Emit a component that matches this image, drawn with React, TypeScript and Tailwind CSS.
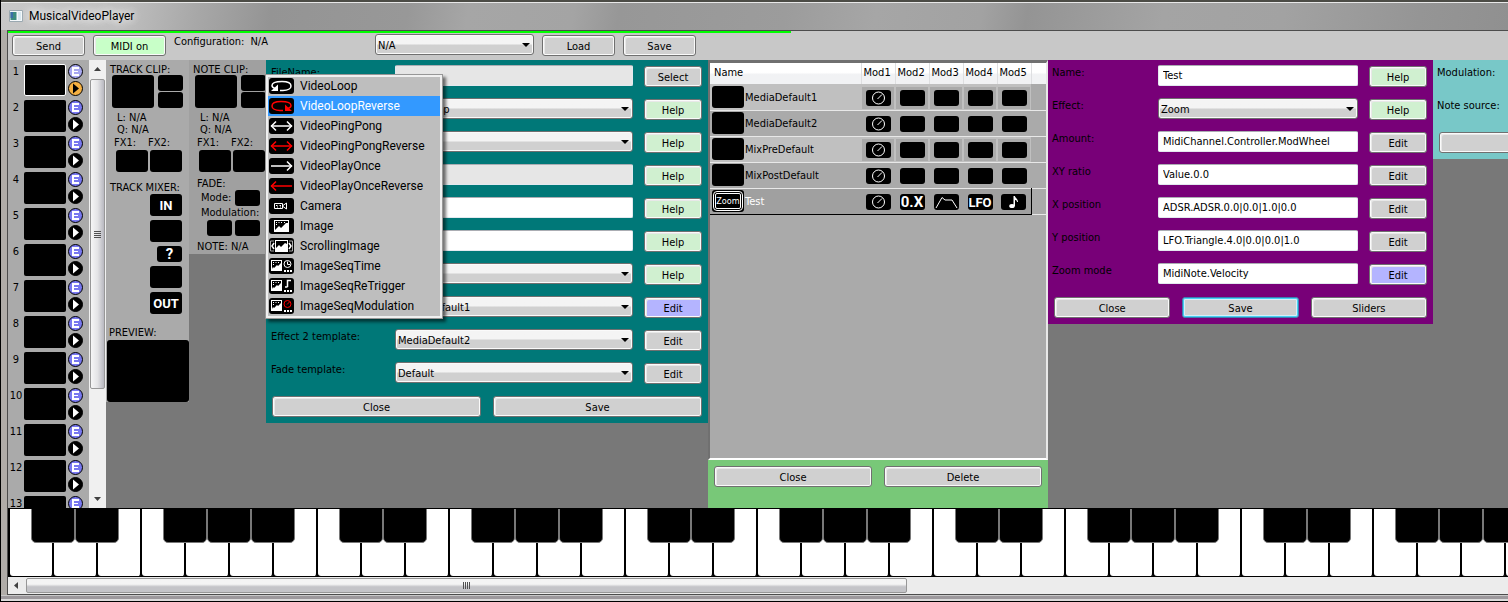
import React from 'react';

const ui = "font-['DejaVu_Sans_Condensed','DejaVu_Sans',sans-serif]";

type Tone = 'plain' | 'green' | 'mint' | 'blue';

const tones: Record<Tone, string> = {
  plain: 'bg-[#d0d0d0]',
  green: 'bg-[#c8ffc8]',
  mint: 'bg-[#d0f0d0]',
  blue: 'bg-[#b4b4ff]',
};

function Btn({ children, label, tone = 'plain', focused = false, className = '' }: {
  children?: React.ReactNode;
  label?: string;
  tone?: Tone;
  focused?: boolean;
  className?: string;
}) {
  const edge = focused
    ? 'border-[#3c7fb1] shadow-[inset_0_0_0_1px_#46d0f5,inset_0_0_0_2px_#d8f0f8]'
    : 'border-[#707070] shadow-[inset_0_0_0_1px_#fafafa,inset_2px_2px_0_0_#e8e8e8]';
  return (
    <button type="button" aria-label={label} className={`flex h-[21px] items-center justify-center rounded-[3px] border pt-[2px] text-black ${edge} ${tones[tone]} ${className}`}>
      {children}
    </button>
  );
}

function Combo({ id, value, className = '' }: { id: string; value: string; className?: string }) {
  return (
    <span className={`relative block ${className}`}>
      <select
        id={id}
        defaultValue={value}
        className="block h-[21px] w-full appearance-none rounded-[3px] border border-[#707070] bg-linear-to-b from-[#f4f4f4] from-45% to-[#d0d0d0] to-55% pt-[2px] pl-[2px] text-black shadow-[inset_0_0_0_1px_#fafafa] outline-none"
      >
        <option>{value}</option>
      </select>
      <svg className="pointer-events-none absolute top-[9px] right-1" width="8" height="4" viewBox="0 0 8 4" aria-hidden="true">
        <path d="M0 0H8L4 4Z" fill="#000" />
      </svg>
    </span>
  );
}

function TextBox({ id, value = '', disabled = false }: { id: string; value?: string; disabled?: boolean }) {
  return (
    <input
      id={id}
      type="text"
      defaultValue={value}
      disabled={disabled}
      className={`block h-[21px] w-full rounded-[2px] border border-[#e3e9ef] border-t-[#abadb3] pl-1 text-black outline-none ${disabled ? 'bg-[#e6e6e6]' : 'bg-white'}`}
    />
  );
}

/* ---------- tracks ---------- */

function Tile({ className = '', children }: { className?: string; children?: React.ReactNode }) {
  return <div className={`flex shrink-0 items-center justify-center rounded-[3px] bg-black text-white ${className}`}>{children}</div>;
}

const small = 'h-4 w-[25px]';
const medium = 'h-[22px] w-8';

function TrackRow({ n }: { n: number }) {
  const first = n === 1;
  return (
    <li className="flex h-9 shrink-0">
      <span className="w-4 pt-px text-center text-[11px]">{n}</span>
      <button
        type="button"
        aria-label={`Track ${n} clip`}
        className={`h-8 w-[42px] rounded-[2px] bg-black ${first ? 'border border-white' : ''}`}
      />
      <span className="ml-[2px] flex flex-col gap-[2px]">
        <button type="button" aria-label={`Track ${n} edit`}>
          <svg width="15" height="15" viewBox="0 0 15 15">
            <circle cx="7.5" cy="7.5" r="7" fill={first ? '#a8a8f0' : '#7878f0'} stroke="#000" />
            <path d="M4 3H11V5H6V7H10V8H6V10H11V12H4Z" fill="#fff" />
          </svg>
        </button>
        <button type="button" aria-label={`Track ${n} play`}>
          <svg width="15" height="15" viewBox="0 0 15 15">
            <circle cx="7.5" cy="7.5" r="7" fill={first ? '#f5b041' : '#000'} stroke="#000" />
            <path d="M5 2.500V12.500L11 7.500Z" fill={first ? '#000' : '#fff'} />
          </svg>
        </button>
      </span>
    </li>
  );
}

function Tracks() {
  return (
    <div className="relative w-[98px] shrink-0 overflow-hidden bg-[#aaa]">
      <div className="absolute inset-0 flex">
        <ol className="flex w-[81px] flex-col pt-1">
          {Array.from({ length: 13 }, (_, i) => <TrackRow key={i} n={i + 1} />)}
        </ol>
        <div className="flex w-[17px] flex-col items-center bg-[#f0f0f0]">
          <svg className="mt-[7px] shrink-0" width="7" height="4" viewBox="0 0 7 4"><path d="M0 4H7L3.500 0Z" fill="#404040" /></svg>
          <div className="mt-2 flex h-[310px] w-[15px] shrink-0 flex-col items-center justify-center gap-px rounded-[2px] border border-[#979797] bg-linear-to-r from-[#f6f6f6] via-[#e4e4e6] to-[#b8b8c0]">
            {[0, 1, 2, 3].map((i) => <i key={i} className="h-px w-[7px] bg-[#505050]" />)}
          </div>
          <svg className="mt-auto mb-[7px] shrink-0" width="7" height="4" viewBox="0 0 7 4"><path d="M0 0H7L3.500 4Z" fill="#404040" /></svg>
        </div>
      </div>
    </div>
  );
}

function ClipHead({ title }: { title: string }) {
  return (
    <>
      <h2 className="h-[15px] pt-[3px] pl-1 leading-[13px] whitespace-nowrap">{title}</h2>
      <div className="flex gap-1 pl-[6px]">
        <Tile className="h-[33px] w-[42px]" />
        <div className="flex flex-col gap-px">
          <Tile className={small} />
          <Tile className={small} />
        </div>
      </div>
      <div className="pt-1 pl-[11px] leading-[12px]">
        <p>L: N/A</p>
        <p>Q: N/A</p>
      </div>
      <div className="flex gap-[2px] pl-2 leading-[14px]">
        <span className="w-8">FX1:</span>
        <span className="w-8">FX2:</span>
      </div>
      <div className="flex gap-[2px] pl-[10px]">
        <Tile className={medium} />
        <Tile className={medium} />
      </div>
    </>
  );
}

const glyph = "font-['Roboto',sans-serif] font-bold leading-none";

function TrackClip() {
  return (
    <section className="w-[83px] shrink-0 self-start bg-[#aaa]">
      <ClipHead title="TRACK CLIP:" />
      <h2 className="pt-[9px] pl-1 leading-[13px] whitespace-nowrap">TRACK MIXER:</h2>
      <div className="flex flex-col items-end gap-1 pr-[7px]">
        <Tile className={medium}><span className={`text-[13px] ${glyph}`}>IN</span></Tile>
        <Tile className={medium} />
        <Tile className={small}><span className={`text-[15px] ${glyph}`}>?</span></Tile>
        <Tile className={medium} />
        <Tile className={medium}><span className={`text-[13px] ${glyph}`}>OUT</span></Tile>
      </div>
      <h2 className="pt-3 pb-px pl-[3px] leading-[13px]">PREVIEW:</h2>
      <Tile className="ml-px h-[62px] w-[82px]" />
    </section>
  );
}

function NoteClip() {
  return (
    <section className="w-[77px] shrink-0 self-start overflow-hidden bg-[#a0a0a0]">
      <ClipHead title="NOTE CLIP:" />
      <h2 className="pt-[5px] pl-2 leading-[13px]">FADE:</h2>
      <div className="flex justify-between pr-[6px] pl-3">
        <span className="leading-[16px]">Mode:</span>
        <Tile className={small} />
      </div>
      <p className="pl-3 leading-[14px]">Modulation:</p>
      <div className="flex justify-end gap-[3px] pr-[6px]">
        <Tile className={small} />
        <Tile className={small} />
      </div>
      <p className="pt-1 pl-2 leading-[14px]">NOTE: N/A</p>
    </section>
  );
}

/* ---------- media template ---------- */

type Field = {
  label: string;
  kind: 'text' | 'combo' | 'off';
  value?: string;
  action: string;
  tone?: Tone;
};

const mediaFields: Field[] = [
  { label: 'FileName:', kind: 'off', action: 'Select' },
  { label: 'Type:', kind: 'combo', value: 'VideoLoop', action: 'Help', tone: 'mint' },
  { label: 'MixMode:', kind: 'combo', value: 'Add', action: 'Help', tone: 'mint' },
  { label: 'SyncLength:', kind: 'off', action: 'Help', tone: 'mint' },
  { label: 'Quantize:', kind: 'text', action: 'Help', tone: 'mint' },
  { label: 'MidiNote:', kind: 'text', action: 'Help', tone: 'mint' },
  { label: 'Mode:', kind: 'combo', value: 'Key', action: 'Help', tone: 'mint' },
  { label: 'Effect 1 template:', kind: 'combo', value: 'MediaDefault1', action: 'Edit', tone: 'blue' },
  { label: 'Effect 2 template:', kind: 'combo', value: 'MediaDefault2', action: 'Edit' },
  { label: 'Fade template:', kind: 'combo', value: 'Default', action: 'Edit' },
];

const effectFields: Field[] = [
  { label: 'Name:', kind: 'text', value: 'Test', action: 'Help', tone: 'mint' },
  { label: 'Effect:', kind: 'combo', value: 'Zoom', action: 'Help', tone: 'mint' },
  { label: 'Amount:', kind: 'text', value: 'MidiChannel.Controller.ModWheel', action: 'Edit' },
  { label: 'XY ratio', kind: 'text', value: 'Value.0.0', action: 'Edit' },
  { label: 'X position', kind: 'text', value: 'ADSR.ADSR.0.0|0.0|1.0|0.0', action: 'Edit' },
  { label: 'Y position', kind: 'text', value: 'LFO.Triangle.4.0|0.0|0.0|1.0', action: 'Edit' },
  { label: 'Zoom mode', kind: 'text', value: 'MidiNote.Velocity', action: 'Edit', tone: 'blue' },
];

function FieldRow({ field, id, columns }: { field: Field; id: string; columns: string }) {
  return (
    <div className={`grid h-[33px] items-start ${columns}`}>
      <label htmlFor={id} className="pt-px whitespace-nowrap">{field.label}</label>
      {field.kind === 'combo'
        ? <Combo id={id} value={field.value ?? ''} />
        : <TextBox id={id} value={field.value} disabled={field.kind === 'off'} />}
      <Btn tone={field.tone} className="mt-px ml-[11px]">{field.action}</Btn>
    </div>
  );
}

function MenuIcon({ children }: { children: React.ReactNode }) {
  return (
    <svg width="25" height="16" viewBox="0 0 25 16" className="shrink-0" aria-hidden="true">
      <rect width="25" height="16" rx="3" fill="#000" />
      {children}
    </svg>
  );
}

function LoopArt({ color, flip }: { color: string; flip?: boolean }) {
  return (
    <g transform={flip ? 'translate(25 0) scale(-1 1)' : undefined} fill="none" stroke={color} strokeWidth="1.500">
      <path d="M11 12.500H14C19 12.500 22 10.500 22 8C22 5 18 3.500 13 3.500C8 3.500 3 4.500 3 7.500C3 9 4.500 10 6 10.500" />
      <path d="M2 13H9V6.500Z" fill={color} stroke="none" />
    </g>
  );
}

function ArrowArt({ color, left, right }: { color: string; left?: boolean; right?: boolean }) {
  return (
    <g fill="none" stroke={color} strokeWidth="1.500">
      <path d="M2 8H23" />
      {left && <path d="M7 3.500L2.500 8L7 12.500" />}
      {right && <path d="M18 3.500L22.500 8L18 12.500" />}
    </g>
  );
}

function Photo() {
  return (
    <>
      <path d="M2 2H13V13H2Z" fill="#fff" />
      <path d="M3 3H12V5L9 8L8 7L5 10L4 9L3 11Z" fill="#000" />
      <path d="M4 4.500H5M6.500 4.500H7.500M9 4.500H10M4 6.500H5" stroke="#fff" />
    </>
  );
}

function Dots() {
  return <path d="M15 12H17V14H15ZM18 12H20V14H18ZM21 12H23V14H21Z" fill="#fff" />;
}

const menu: { name: string; art: React.ReactNode }[] = [
  { name: 'VideoLoop', art: <LoopArt color="#fff" /> },
  { name: 'VideoLoopReverse', art: <LoopArt color="#f00" flip /> },
  { name: 'VideoPingPong', art: <ArrowArt color="#fff" left right /> },
  { name: 'VideoPingPongReverse', art: <ArrowArt color="#f00" left right /> },
  { name: 'VideoPlayOnce', art: <ArrowArt color="#fff" right /> },
  { name: 'VideoPlayOnceReverse', art: <ArrowArt color="#f00" left /> },
  {
    name: 'Camera',
    art: (
      <g fill="none" stroke="#fff">
        <path d="M5.500 5.500H13.500V10.500H5.500ZM14 7.500L17.500 5V11L14 8.500" />
        <path d="M7 7.500H8.500M10.500 7.500H12M8 9H9M11 9H12" />
      </g>
    ),
  },
  {
    name: 'Image',
    art: (
      <>
        <path d="M5 2H20V14H5Z" fill="#fff" />
        <path d="M6 3H19V5L17 5L12 10L10 8L6 12Z" fill="#000" />
        <path d="M7 4.500H8M9.500 4.500H10.500M12 4.500H13M15 4.500H16M7 6.500H8" stroke="#fff" />
      </>
    ),
  },
  {
    name: 'ScrollingImage',
    art: (
      <>
        <path d="M1.500 3H5M1.500 13H5M20 3H23.500M20 13H23.500M1.500 3V13M23.500 3V13" stroke="#aaa" />
        <path d="M6 2H19V14H6Z" fill="#fff" />
        <path d="M7 3H18V6L16 5L12 9L10 7L7 10Z" fill="#000" />
        <path d="M5 5L3 8L5 11M20 5L22 8L20 11" fill="none" stroke="#fff" strokeWidth="1.500" />
      </>
    ),
  },
  {
    name: 'ImageSeqTime',
    art: (
      <>
        <Photo />
        <Dots />
        <circle cx="18.500" cy="6" r="3.500" fill="none" stroke="#fff" />
        <path d="M18.500 3.500V6.500H21" fill="none" stroke="#fff" />
      </>
    ),
  },
  {
    name: 'ImageSeqReTrigger',
    art: (
      <>
        <Photo />
        <Dots />
        <path d="M18.500 9V2.500H22M16 9H18.500" fill="none" stroke="#fff" strokeWidth="1.500" />
      </>
    ),
  },
  {
    name: 'ImageSeqModulation',
    art: (
      <>
        <Photo />
        <Dots />
        <circle cx="18.500" cy="6" r="3.500" fill="none" stroke="#f00" />
        <path d="M18 6.500L20.500 4" stroke="#f00" />
      </>
    ),
  },
];

function TypeMenu() {
  return (
    <ul
      role="menu"
      className="absolute top-[14px] -left-px z-10 w-[178px] border border-[#979797] bg-[#bebebe] px-px pt-px pb-[2px] font-['Roboto',sans-serif] text-[12px] shadow-[inset_0_0_0_2px_#f0f0f0,3px_3px_3px_rgba(0,0,0,0.55)]"
    >
      {menu.map((item, i) => (
        <li key={item.name} role="none" className="px-px">
          <button
            type="button"
            role="menuitem"
            className={`flex h-5 w-full items-center gap-[6px] pl-px text-left ${i === 1 ? 'bg-[#3399ff] text-white' : 'text-black'}`}
          >
            <MenuIcon>{item.art}</MenuIcon>
            {item.name}
          </button>
        </li>
      ))}
    </ul>
  );
}

function MediaPanel() {
  return (
    <section className="relative w-[442px] shrink-0 self-start bg-[#007878] pt-[5px] pr-[6px] pb-[6px] pl-[5px]">
      {mediaFields.map((f, i) => (
        <FieldRow key={f.label} field={f} id={`media-${i}`} columns="grid-cols-[124px_238px_1fr]" />
      ))}
      <div className="mt-px ml-px grid grid-cols-2 gap-3">
        <Btn>Close</Btn>
        <Btn>Save</Btn>
      </div>
      <TypeMenu />
    </section>
  );
}

/* ---------- effect list ---------- */

const dial = (
  <g fill="none" stroke="#fff">
    <circle cx="12.500" cy="8" r="6" />
    <path d="M11.500 9L16 4.500" />
  </g>
);

function ModTile({ art, children }: { art?: React.ReactNode; children?: React.ReactNode }) {
  return (
    <Tile className={`mx-auto ${small}`}>
      {art && <svg width="25" height="16" viewBox="0 0 25 16" aria-hidden="true">{art}</svg>}
      {children}
    </Tile>
  );
}

const effects = ['MediaDefault1', 'MediaDefault2', 'MixPreDefault', 'MixPostDefault', 'Test'];

function EffectList() {
  return (
    <section className="flex w-[340px] shrink-0 flex-col bg-[#78c878]">
      <div className="flex-1 border-2 border-t-[3px] border-r-[#e8e8e8] border-b-white border-l-[#707070] border-t-[#707070] bg-[#aaa]">
        <table className="w-full table-fixed border-collapse">
          <colgroup>
            <col className="w-[151px]" />
            <col className="w-[34px]" />
            <col className="w-[34px]" />
            <col className="w-[34px]" />
            <col className="w-[34px]" />
            <col className="w-[34px]" />
            <col />
          </colgroup>
          <thead>
            <tr className="h-[21px] bg-linear-to-b from-white from-45% to-[#f1f2f4] to-55% text-left">
              <th scope="col" className="border-r border-[#dedfe1] p-0 pb-[2px] pl-1 font-normal">Name</th>
              {[1, 2, 3, 4, 5].map((m) => (
                <th key={m} scope="col" className="border-r border-[#dedfe1] p-0 pb-[2px] pl-[2px] font-normal">Mod{m}</th>
              ))}
              <td />
            </tr>
          </thead>
          <tbody>
            {effects.map((name, r) => {
              const chosen = name === 'Test';
              const lit = r === 0 || r === 2;
              const band = chosen ? 'bg-[#a0a0a0] border-y border-t-[#e8e8e8] border-b-black' : lit ? 'bg-[#c0c0c0]' : '';
              return (
                <tr key={name} className="h-[26px] border-b border-[#e8e8e8]">
                  <td className={`p-0 pl-[2px] ${band}`}>
                    <div className="flex items-center">
                      <Tile className={medium}>
                        {chosen && (
                          <span className="flex h-4 w-[26px] items-center justify-center rounded-[2px] border border-white text-[9px] leading-none outline outline-white outline-offset-1">
                            Zoom
                          </span>
                        )}
                      </Tile>
                      <span className={`pt-[2px] pl-px ${chosen ? 'text-white' : ''}`}>{name}</span>
                    </div>
                  </td>
                  {[0, 1, 2, 3, 4].map((c) => (
                    <td key={c} className={`p-0 pt-[2px] ${band} ${chosen && c === 4 ? 'border-r border-r-black' : ''}`}>
                      <div className={`mx-px flex h-[22px] items-center ${chosen ? '' : 'bg-[#aaa]'}`}>
                        <ModTile
                          art={
                            c === 0 ? dial
                              : chosen && c === 2 ? <path d="M2 14L8 3.500L11 6H18L23 14" fill="none" stroke="#fff" />
                                : chosen && c === 4 ? (
                                  <g fill="#fff">
                                    <ellipse cx="11" cy="12" rx="2.800" ry="2" />
                                    <path d="M12.500 2H14C14 4 17 4.500 17 8L16 8C16 6 14 6 14 6V12H12.500Z" />
                                  </g>
                                ) : undefined
                          }
                        >
                          {chosen && c === 1 && <span className={`text-[15px] ${glyph}`}>0.X</span>}
                          {chosen && c === 3 && <span className={`text-[13px] ${glyph}`}>LFO</span>}
                        </ModTile>
                      </div>
                    </td>
                  ))}
                  <td />
                </tr>
              );
            })}
          </tbody>
        </table>
      </div>
      <div className="grid h-12 grid-cols-2 gap-3 px-[6px] pt-[6px]">
        <Btn>Close</Btn>
        <Btn>Delete</Btn>
      </div>
    </section>
  );
}

function EffectPanel() {
  return (
    <section className="w-[385px] shrink-0 self-start bg-[#780078] pt-[5px] pr-[6px] pb-[6px] pl-1">
      {effectFields.map((f, i) => (
        <FieldRow key={f.label} field={f} id={`effect-${i}`} columns="grid-cols-[106px_200px_1fr]" />
      ))}
      <div className="mt-px ml-[2px] grid grid-cols-3 gap-3">
        <Btn>Close</Btn>
        <Btn focused>Save</Btn>
        <Btn>Sliders</Btn>
      </div>
    </section>
  );
}

function ModulationPanel() {
  return (
    <section className="w-[385px] shrink-0 self-start bg-[#78c8c8] pt-[5px] pb-[6px] pl-1">
      <p className="h-[33px] pt-px">Modulation:</p>
      <p className="h-[33px] pt-px">Note source:</p>
      <Btn label="Close modulation" className="mt-px ml-[2px] w-[180px]" />
    </section>
  );
}

/* ---------- keyboard ---------- */

function Keyboard() {
  return (
    <div className="flex h-[69px] shrink-0 overflow-hidden border-y border-black bg-black pl-[2px]">
      {Array.from({ length: 63 }, (_, i) => {
        const step = i % 7;
        const sharp = step !== 2 && step !== 6;
        return (
          <div key={i} className="relative w-11 shrink-0">
            <button type="button" aria-label={`White key ${i + 1}`} className="block h-full w-full rounded-b-[3px] border-r-2 border-black bg-white" />
            {sharp && (
              <button
                type="button"
                aria-label={`Black key ${i + 1}`}
                className="absolute -top-px left-[21px] z-10 h-[35px] w-11 rounded-b-[5px] border border-[#787878] bg-black"
              />
            )}
          </div>
        );
      })}
    </div>
  );
}

function SideScroll() {
  return (
    <div className="flex h-[17px] shrink-0 items-center bg-[#ececec]">
      <svg className="ml-[6px]" width="4" height="7" viewBox="0 0 4 7"><path d="M4 0V7L0 3.500Z" fill="#404040" /></svg>
      <div className="ml-2 flex h-[15px] w-[58.7%] items-center justify-center gap-px rounded-[2px] border border-[#979797] bg-linear-to-b from-[#f4f4f4] from-40% to-[#c4c4c8] to-60%">
        {[0, 1, 2, 3].map((i) => <i key={i} className="h-[7px] w-px bg-[#505050]" />)}
      </div>
    </div>
  );
}

export default function App() {
  return (
    <main className={`flex h-screen min-h-[602px] flex-col overflow-hidden border-l border-black bg-[#9c9c9c] text-[11px] leading-[14px] text-black ${ui}`}>
      <div className="h-[2px] shrink-0 bg-[#4c4c46]" />
      <header className="flex h-7 shrink-0 items-center gap-[6px] border-t border-[#e8e8e8] bg-[linear-gradient(100deg,#c8c8c8_0%,#c0c0c0_8%,#a8a8a8_13%,#949494_18%,#989898_27%,#a6a6a6_31%,#a4a4a4_38%,#979797_41%,#9c9c9c_52%,#a6a6a6_58%,#a2a2a2_65%,#949494_68%,#a4a4a4_77%,#a2a2a2_85%,#959595_94%,#909090_100%)] pb-px pl-2">
        <svg width="14" height="12" viewBox="0 0 14 12" aria-hidden="true">
          <path d="M.5.500H13.500V11.500H.5Z" fill="#f4f8fa" stroke="#9aa8b0" />
          <path d="M1.500 2H7.500V10H1.500Z" fill="#3c8c80" />
          <path d="M1.500 2H4V8H1.500Z" fill="#3a6ea8" />
          <path d="M9 2H12V10H9Z" fill="#d8e8f0" />
        </svg>
        <h1 className="font-['Roboto',sans-serif] text-[12px] [text-shadow:0_0_8px_#fff,0_0_12px_#fff]">MusicalVideoPlayer</h1>
      </header>
      <div className="flex min-h-0 flex-1 border-l-[6px] border-[#b0aca8]">
        <div className="flex min-w-0 flex-1 flex-col border-y border-l border-[#4c4c4c] bg-[#787878]">
          <div className="flex h-[29px] shrink-0 flex-col bg-[#c8c8c8]">
            <div className="h-[2px] w-[52.2%] bg-[#00ff00]" />
            <div className="flex gap-2 pt-px pl-1">
              <Btn className="mt-px w-[73px]">Send</Btn>
              <Btn tone="green" className="mt-px w-[73px]">MIDI on</Btn>
              <label htmlFor="configuration" className="flex w-[193px] gap-[6px] pt-px"><span>Configuration:</span><span>N/A</span></label>
              <Combo id="configuration" value="N/A" className="w-[159px]" />
              <Btn className="mt-px w-[73px]">Load</Btn>
              <Btn className="mt-px w-[73px]">Save</Btn>
            </div>
          </div>
          <div className="flex min-h-0 flex-1">
            <Tracks />
            <TrackClip />
            <NoteClip />
            <MediaPanel />
            <EffectList />
            <EffectPanel />
            <ModulationPanel />
          </div>
          <Keyboard />
          <SideScroll />
        </div>
      </div>
      <div className="h-[7px] shrink-0 border-b border-black bg-[#9c989c] shadow-[inset_0_-2px_0_0_#dcdcdc,inset_0_1px_0_0_#c8c8c8]" />
    </main>
  );
}
